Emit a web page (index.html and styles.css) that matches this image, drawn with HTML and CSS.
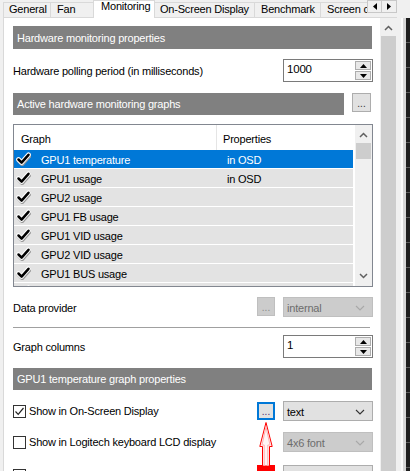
FILE: index.html
```html
<!DOCTYPE html>
<html>
<head>
<meta charset="utf-8">
<link rel="stylesheet" href="styles.css">
</head>
<body>
<div class="win">
  <div class="tabbar">
    <div class="tabs">
      <div class="tab first">General</div>
      <div class="tab before-sel">Fan</div>
      <div class="tab sel">Monitoring</div>
      <div class="tab">On-Screen Display</div>
      <div class="tab">Benchmark</div>
      <div class="tab">Screen capture</div>
    </div>
    <div class="tabnav">
      <div class="navbtns">
        <div class="navbtn"><svg width="4" height="7" viewBox="0 0 4 7"><polygon points="4,0 0,3.5 4,7" fill="#000"/></svg></div>
        <div class="navbtn"><svg width="4" height="7" viewBox="0 0 4 7"><polygon points="0,0 4,3.5 0,7" fill="#000"/></svg></div>
      </div>
      <div class="navline"></div>
    </div>
  </div>
  <div class="main">
    <div class="panel">
      <div class="section-head h-first">Hardware monitoring properties</div>

      <div class="row r-poll">
        <span class="label">Hardware polling period (in milliseconds)</span>
        <div class="spin">
          <span class="spin-val">1000</span>
          <div class="spin-btns">
            <div class="sbtn"><svg width="7" height="4" viewBox="0 0 7 4"><polygon points="0,4 3.5,0 7,4" fill="#000"/></svg></div>
            <div class="sbtn"><svg width="7" height="4" viewBox="0 0 7 4"><polygon points="0,0 3.5,4 7,0" fill="#000"/></svg></div>
          </div>
        </div>
      </div>

      <div class="head-row">
        <div class="section-head grow">Active hardware monitoring graphs</div>
        <div class="btn dots top">...</div>
      </div>

      <div class="list">
        <div class="list-main">
          <div class="list-header">
            <div class="lh-col1">Graph</div>
            <div class="lh-col2">Properties</div>
          </div>
          <div class="rows">
            <div class="lrow selected"><span class="chk"><svg width="15" height="14" viewBox="0 0 15 14"><path d="M2.5 7.5 L5.6 10.6 L12.5 2.8" fill="none" stroke="#9a9a9a" stroke-width="5" stroke-linecap="round" stroke-linejoin="round" transform="translate(0.6,0.8)"/><path d="M2.5 7.5 L5.6 10.6 L12.5 2.8" fill="none" stroke="#fff" stroke-width="4.6" stroke-linecap="round" stroke-linejoin="round"/><path d="M2.5 7.5 L5.6 10.6 L12.5 2.8" fill="none" stroke="#000" stroke-width="2.5" stroke-linecap="round" stroke-linejoin="round"/></svg></span><span class="name">GPU1 temperature</span><span class="prop">in OSD</span></div>
            <div class="lrow"><span class="chk"><svg width="15" height="14" viewBox="0 0 15 14"><path d="M2.5 7.5 L5.6 10.6 L12.5 2.8" fill="none" stroke="#9a9a9a" stroke-width="5" stroke-linecap="round" stroke-linejoin="round" transform="translate(0.6,0.8)"/><path d="M2.5 7.5 L5.6 10.6 L12.5 2.8" fill="none" stroke="#fff" stroke-width="4.6" stroke-linecap="round" stroke-linejoin="round"/><path d="M2.5 7.5 L5.6 10.6 L12.5 2.8" fill="none" stroke="#000" stroke-width="2.5" stroke-linecap="round" stroke-linejoin="round"/></svg></span><span class="name">GPU1 usage</span><span class="prop">in OSD</span></div>
            <div class="lrow"><span class="chk"><svg width="15" height="14" viewBox="0 0 15 14"><path d="M2.5 7.5 L5.6 10.6 L12.5 2.8" fill="none" stroke="#9a9a9a" stroke-width="5" stroke-linecap="round" stroke-linejoin="round" transform="translate(0.6,0.8)"/><path d="M2.5 7.5 L5.6 10.6 L12.5 2.8" fill="none" stroke="#fff" stroke-width="4.6" stroke-linecap="round" stroke-linejoin="round"/><path d="M2.5 7.5 L5.6 10.6 L12.5 2.8" fill="none" stroke="#000" stroke-width="2.5" stroke-linecap="round" stroke-linejoin="round"/></svg></span><span class="name">GPU2 usage</span><span class="prop"></span></div>
            <div class="lrow"><span class="chk"><svg width="15" height="14" viewBox="0 0 15 14"><path d="M2.5 7.5 L5.6 10.6 L12.5 2.8" fill="none" stroke="#9a9a9a" stroke-width="5" stroke-linecap="round" stroke-linejoin="round" transform="translate(0.6,0.8)"/><path d="M2.5 7.5 L5.6 10.6 L12.5 2.8" fill="none" stroke="#fff" stroke-width="4.6" stroke-linecap="round" stroke-linejoin="round"/><path d="M2.5 7.5 L5.6 10.6 L12.5 2.8" fill="none" stroke="#000" stroke-width="2.5" stroke-linecap="round" stroke-linejoin="round"/></svg></span><span class="name">GPU1 FB usage</span><span class="prop"></span></div>
            <div class="lrow"><span class="chk"><svg width="15" height="14" viewBox="0 0 15 14"><path d="M2.5 7.5 L5.6 10.6 L12.5 2.8" fill="none" stroke="#9a9a9a" stroke-width="5" stroke-linecap="round" stroke-linejoin="round" transform="translate(0.6,0.8)"/><path d="M2.5 7.5 L5.6 10.6 L12.5 2.8" fill="none" stroke="#fff" stroke-width="4.6" stroke-linecap="round" stroke-linejoin="round"/><path d="M2.5 7.5 L5.6 10.6 L12.5 2.8" fill="none" stroke="#000" stroke-width="2.5" stroke-linecap="round" stroke-linejoin="round"/></svg></span><span class="name">GPU1 VID usage</span><span class="prop"></span></div>
            <div class="lrow"><span class="chk"><svg width="15" height="14" viewBox="0 0 15 14"><path d="M2.5 7.5 L5.6 10.6 L12.5 2.8" fill="none" stroke="#9a9a9a" stroke-width="5" stroke-linecap="round" stroke-linejoin="round" transform="translate(0.6,0.8)"/><path d="M2.5 7.5 L5.6 10.6 L12.5 2.8" fill="none" stroke="#fff" stroke-width="4.6" stroke-linecap="round" stroke-linejoin="round"/><path d="M2.5 7.5 L5.6 10.6 L12.5 2.8" fill="none" stroke="#000" stroke-width="2.5" stroke-linecap="round" stroke-linejoin="round"/></svg></span><span class="name">GPU2 VID usage</span><span class="prop"></span></div>
            <div class="lrow"><span class="chk"><svg width="15" height="14" viewBox="0 0 15 14"><path d="M2.5 7.5 L5.6 10.6 L12.5 2.8" fill="none" stroke="#9a9a9a" stroke-width="5" stroke-linecap="round" stroke-linejoin="round" transform="translate(0.6,0.8)"/><path d="M2.5 7.5 L5.6 10.6 L12.5 2.8" fill="none" stroke="#fff" stroke-width="4.6" stroke-linecap="round" stroke-linejoin="round"/><path d="M2.5 7.5 L5.6 10.6 L12.5 2.8" fill="none" stroke="#000" stroke-width="2.5" stroke-linecap="round" stroke-linejoin="round"/></svg></span><span class="name">GPU1 BUS usage</span><span class="prop"></span></div>
            <div class="lrow"><span class="chk"><svg width="15" height="14" viewBox="0 0 15 14"><path d="M2.5 7.5 L5.6 10.6 L12.5 2.8" fill="none" stroke="#9a9a9a" stroke-width="5" stroke-linecap="round" stroke-linejoin="round" transform="translate(0.6,0.8)"/><path d="M2.5 7.5 L5.6 10.6 L12.5 2.8" fill="none" stroke="#fff" stroke-width="4.6" stroke-linecap="round" stroke-linejoin="round"/><path d="M2.5 7.5 L5.6 10.6 L12.5 2.8" fill="none" stroke="#000" stroke-width="2.5" stroke-linecap="round" stroke-linejoin="round"/></svg></span></div>
          </div>
        </div>
        <div class="list-sb">
          <div class="lsb-up"><svg width="9" height="6" viewBox="0 0 9 6"><path d="M1 5 L4.5 1.5 L8 5" fill="none" stroke="#606060" stroke-width="1.5"/></svg></div>
          <div class="lsb-thumb"></div>
          <div class="lsb-track"></div>
          <div class="lsb-down"><svg width="9" height="6" viewBox="0 0 9 6"><path d="M1 1 L4.5 4.5 L8 1" fill="none" stroke="#606060" stroke-width="1.5"/></svg></div>
        </div>
      </div>

      <div class="row r-data">
        <span class="label">Data provider</span>
        <div class="ctrls">
          <div class="btn dots disabled">...</div>
          <div class="select disabled"><span>internal</span><svg width="10" height="6" viewBox="0 0 10 6"><path d="M1 1 L5 5 L9 1" fill="none" stroke="#a8a8a8" stroke-width="1.1"/></svg></div>
        </div>
      </div>

      <div class="sep"></div>

      <div class="row r-cols">
        <span class="label">Graph columns</span>
        <div class="spin">
          <span class="spin-val">1</span>
          <div class="spin-btns">
            <div class="sbtn"><svg width="7" height="4" viewBox="0 0 7 4"><polygon points="0,4 3.5,0 7,4" fill="#000"/></svg></div>
            <div class="sbtn"><svg width="7" height="4" viewBox="0 0 7 4"><polygon points="0,0 3.5,4 7,0" fill="#000"/></svg></div>
          </div>
        </div>
      </div>

      <div class="section-head h-third">GPU1 temperature graph properties</div>

      <div class="row r-osd">
        <label class="check"><span class="box checked"><svg width="11" height="11" viewBox="0 0 11 11"><path d="M1.5 5.5 L4.2 8.3 L9.5 2" fill="none" stroke="#222" stroke-width="1.2"/></svg></span><span>Show in On-Screen Display</span></label>
        <div class="ctrls">
          <div class="btn dots focused">...</div>
          <div class="select"><span>text</span><svg width="10" height="6" viewBox="0 0 10 6"><path d="M1 1 L5 5 L9 1" fill="none" stroke="#333" stroke-width="1.1"/></svg></div>
        </div>
      </div>

      <div class="row r-lcd">
        <label class="check"><span class="box"></span><span>Show in Logitech keyboard LCD display</span></label>
        <div class="ctrls">
          <div class="select disabled"><span>4x6 font</span><svg width="10" height="6" viewBox="0 0 10 6"><path d="M1 1 L5 5 L9 1" fill="none" stroke="#a8a8a8" stroke-width="1.1"/></svg></div>
        </div>
      </div>

      <div class="row r-next">
        <label class="check"><span class="box"></span></label>
        <div class="ctrls">
          <div class="swatch"></div>
          <div class="select"><span></span></div>
        </div>
      </div>

      <svg class="annot" width="22" height="45" viewBox="0 0 22 45">
        <polygon points="11,1.5 17.2,25.5 14.5,25.5 14.5,45 7.5,45 7.5,25.5 4.8,25.5" fill="#fff5f5" stroke="#ff0000" stroke-width="1"/>
        <polyline points="11,6 15,24 12.8,24 12.8,45" fill="none" stroke="#ffb0b0" stroke-width="1"/>
        <polyline points="11,6 7,24 9.2,24 9.2,45" fill="none" stroke="#ffb0b0" stroke-width="1"/>
      </svg>
    </div>
    <div class="vscroll">
      <div class="vs-up"><svg width="9" height="6" viewBox="0 0 9 6"><path d="M1 5 L4.5 1.5 L8 5" fill="none" stroke="#606060" stroke-width="1.5"/></svg></div>
      <div class="vs-thumb"></div>
    </div>
    <div class="gutter"></div>
    <div class="edge"></div>
  </div>
</div>
</body>
</html>
```

FILE: styles.css
```css
* { box-sizing: border-box; }
html, body { margin: 0; padding: 0; }
body {
  width: 410px;
  height: 471px;
  overflow: hidden;
  background: #f0f0f0;
  font-family: "Liberation Sans", Arial, sans-serif;
  font-size: 11px;
  letter-spacing: -0.2px;
  color: #000;
}
.win { display: flex; flex-direction: column; height: 471px; }

/* tabs */
.tabbar { height: 18px; flex: none; display: flex; }
.tabs {
  margin-left: 3px;
  width: 364px;
  height: 18px;
  flex: none;
  display: flex;
  align-items: flex-end;
  overflow: hidden;
}
.tab {
  flex: none;
  height: 16px;
  padding-left: 5px;
  padding-top: 0;
  line-height: 12px;
  background: #f0f0f0;
  border-top: 1px solid #d9d9d9;
  border-right: 1px solid #d9d9d9;
  border-bottom: 1px solid #d9d9d9;
  white-space: nowrap;
}
.tab:nth-child(1) { width: 48px; border-left: 1px solid #d9d9d9; }
.tab:nth-child(2) { width: 42px; padding-left: 6px; }
.tab.before-sel { border-right: none; }
.tab.sel {
  width: 62px;
  height: 18px;
  padding-top: 0;
  line-height: 11px;
  padding-left: 7px;
  background: #fff;
  border-left: 1px solid #d9d9d9;
  border-bottom: none;
}
.tab:nth-child(4) { width: 100px; }
.tab:nth-child(5) { width: 66px; padding-left: 6px; }
.tab:nth-child(6) { width: 80px; padding-left: 6px; }
.tabnav {
  width: 30px;
  height: 18px;
  flex: none;
  display: flex;
  flex-direction: column;
}
.navbtns { display: flex; height: 13px; }
.navline { flex: 1; border-bottom: 1px solid #d9d9d9; }
.navbtn {
  width: 15px;
  height: 13px;
  border: 1px solid #c8c8c8;
  background: #f0f0f0;
  display: flex;
  align-items: center;
  justify-content: center;
}
.navbtn + .navbtn { border-left: none; }

/* main area */
.main { flex: 1; display: flex; min-height: 0; }
.panel {
  margin-left: 3px;
  width: 377px;
  flex: none;
  background: #fff;
  border-left: 1px solid #d9d9d9;
  padding: 8px 0 0 9px;
  position: relative;
  overflow: hidden;
}
.vscroll {
  width: 17px;
  flex: none;
  background: #f0f0f0;
  display: flex;
  flex-direction: column;
  align-items: center;
}
.vs-up { height: 18px; width: 17px; display: flex; align-items: center; justify-content: center; padding-top: 2px; }
.vs-thumb { width: 15px; flex: 1; background: #cdcdcd; }
.gutter {
  width: 9px;
  flex: none;
  background: linear-gradient(to right, #f0f0f0 0 4px, #fbfbfb 4px 6px, #d6d6d6 6px 9px);
}
.edge {
  flex: 1;
  background: repeating-linear-gradient(to bottom, #1e1e1e 0 24px, #5a5a5a 24px 25px);
}

/* panel content */
.section-head {
  width: 359px;
  height: 23px;
  background: #808080;
  color: #fff;
  padding-left: 4px;
  display: flex;
  align-items: center;
}
.row { display: flex; align-items: center; justify-content: space-between; width: 360px; }
.label { padding-top: 1px; }
.r-poll { margin-top: 10px; height: 23px; }
.head-row { margin-top: 11px; display: flex; width: 359px; height: 22px; align-items: flex-start; }
.section-head.grow { width: 331px; height: 22px; }
.btn {
  width: 19px;
  height: 19px;
  background: #e1e1e1;
  border: 1px solid #adadad;
  color: #333;
  font-size: 10px;
  letter-spacing: 0;
  display: flex;
  justify-content: center;
  align-items: flex-end;
  line-height: 12px;
  padding-bottom: 1px;
}
.head-row .btn { margin-left: 8px; }
.btn.disabled { background: #cccccc; border-color: #bfbfbf; color: #8a8a8a; width: 18px; }
.btn.focused { border: 2px solid #0078d7; width: 18px; height: 18px; color: #4a2c6e; padding-bottom: 0; }

/* spin */
.spin {
  width: 90px;
  height: 23px;
  border: 1px solid #7a7a7a;
  background: #fff;
  display: flex;
  justify-content: space-between;
}
.spin-val { padding: 3px 0 0 3px; line-height: 12px; font-size: 11.5px; }
.spin-btns { width: 17px; display: flex; flex-direction: column; padding: 0 1px 1px 0; }
.sbtn {
  height: 10px;
  margin-top: 1px;
  border: 1px solid #adadad;
  background: #e8e8e8;
  display: flex;
  align-items: center;
  justify-content: center;
}

/* list */
.list {
  margin-top: 9px;
  width: 360px;
  height: 163px;
  border: 1px solid #828790;
  display: flex;
  overflow: hidden;
}
.list-main { width: 341px; flex: none; display: flex; flex-direction: column; overflow: hidden; }
.list-header { height: 25px; flex: none; display: flex; background: #fff; }
.lh-col1 { width: 203px; padding-left: 7px; padding-top: 3px; border-right: 1px solid #e5e5e5; display: flex; align-items: center; }
.lh-col2 { padding-left: 6px; padding-top: 3px; display: flex; align-items: center; }
.rows { flex: 1; overflow: hidden; }
.lrow {
  width: 339px;
  height: 19px;
  background: #e3e3e3;
  border-bottom: 1px solid #fff;
  display: flex;
  align-items: center;
}
.lrow.selected { background: #0078d7; color: #fff; }
.chk { width: 27px; padding-left: 2px; display: flex; align-items: center; height: 18px; }
.name { width: 186px; padding-top: 1px; }
.prop { padding-top: 1px; }
.list-sb { width: 17px; flex: none; background: #f0f0f0; display: flex; flex-direction: column; align-items: center; }
.lsb-up { height: 18px; width: 17px; display: flex; align-items: center; justify-content: center; padding-top: 2px; }
.lsb-thumb { width: 15px; height: 16px; background: #cdcdcd; }
.lsb-track { flex: 1; }
.lsb-down { height: 17px; width: 17px; display: flex; align-items: center; justify-content: center; padding-bottom: 3px; }

/* bottom rows */
.ctrls { display: flex; align-items: center; gap: 8px; }
.r-data { margin-top: 10px; height: 20px; }
.r-data .ctrls { align-items: flex-start; }
.r-data .btn { height: 19px; }
.select {
  width: 90px;
  height: 20px;
  background: #e1e1e1;
  border: 1px solid #adadad;
  display: flex;
  align-items: center;
  justify-content: space-between;
  padding: 1px 7px 0 3px;
}
.select.disabled { background: #cccccc; border-color: #bfbfbf; color: #6d6d6d; }
.sep {
  margin-top: 10px;
  width: 357px;
  height: 2px;
  border-top: 1px solid #a0a0a0;
  border-bottom: 1px solid #fff;
}
.r-cols { margin-top: 6px; height: 23px; }
.h-third { margin-top: 10px; height: 22px; }
.r-osd { margin-top: 11px; height: 20px; }
.r-lcd { margin-top: 11px; height: 20px; }
.r-next { margin-top: 13px; height: 20px; align-items: flex-start; }
.r-next .ctrls { align-items: flex-start; }
.r-next .check { padding-top: 4px; }
.check { display: flex; align-items: center; gap: 3px; }
.box {
  width: 13px;
  height: 13px;
  border: 1px solid #333;
  background: #fff;
  display: flex;
  align-items: center;
  justify-content: center;
}
.swatch { width: 18px; height: 18px; background: #ff0000; }

.annot { position: absolute; left: 251px; top: 403px; }
```
